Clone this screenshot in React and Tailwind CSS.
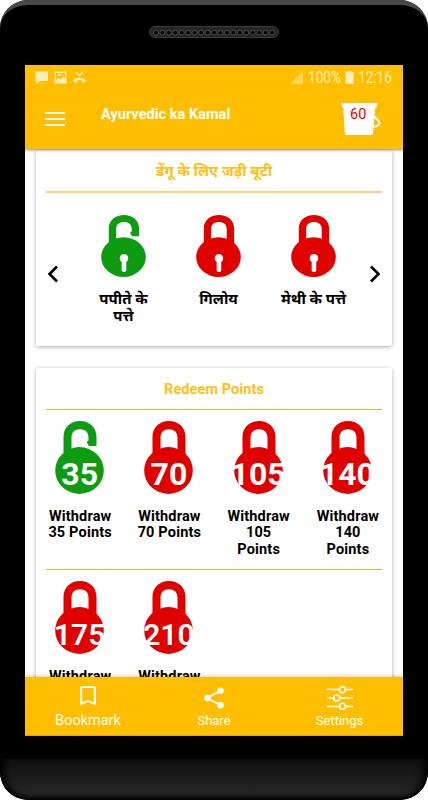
const herbs = [
  { name: "पपीते के पत्ते", open: true },
  { name: "गिलोय", open: false },
  { name: "मेथी के पत्ते", open: false },
];

const rewards = [35, 70, 105, 140, 175, 210];

const Lock = ({ open, keyhole, className }) => (
  <svg
    viewBox="0 0 49 73"
    preserveAspectRatio="none"
    className={`${open ? "text-[#0d9b12]" : "text-[#e00000]"} ${className}`}
    fill="currentColor"
  >
    {open ? (
      <path d="M8.500 38V16C8.500 6 16 0 25 0S41.500 6 41.500 16V25H33.500V23.500L32 22.300V20.500L33.500 19.500V17C33.500 11 30 8.300 25 8.300S16.500 11 16.500 17V38Z" />
    ) : (
      <path d="M8.500 38V16C8.500 6 16 0 25 0S41.500 6 41.500 16V38H33.500V17C33.500 11 30 8.300 25 8.300S16.500 11 16.500 17V38Z" />
    )}
    <ellipse cx="24.500" cy="49.500" rx="24.300" ry="23.400" />
    {keyhole && (
      <path
        fill="#fff"
        d="M25 46c-2.800 0-4.600 2.200-4.600 4.900 0 1.900.8 3.400 2.100 4.200V65c0 1.200 1 2 2.500 2s2.500-.8 2.500-2v-9.900c1.300-.8 2.100-2.300 2.100-4.200 0-2.700-1.800-4.900-4.600-4.900Z"
      />
    )}
  </svg>
);

const Speaker = () => (
  <svg className="h-3 w-[130px]" viewBox="0 0 130 12">
    <rect x="0.500" y="0.500" width="129" height="11" rx="5.500" fill="#242424" stroke="#3b3b3b" />
    {Array.from({ length: 19 }, (_, i) => (
      <circle key={i} cx={7 + i * 6.45} cy="6.600" r="2.500" fill="#050505" stroke="#555" strokeWidth="0.900" />
    ))}
  </svg>
);

const StatusBar = () => (
  <div className="flex h-6 items-center pl-[10px] pr-[11px] text-[#ffedbc]">
    <svg className="h-[13px] w-[13px]" viewBox="0 0 13 13" fill="currentColor">
      <path d="M0.500 0.500H13V10H4.500L1.500 13V10H0.500Z" />
    </svg>
    <svg className="ml-[6px] h-[13px] w-[13px]" viewBox="0 0 13 13" fill="currentColor">
      <path
        fillRule="evenodd"
        d="M1 0.500H12.500V12.500H0.500V0.500ZM2 2V9L4.500 7L6.500 8.500L9.500 5.500L11.500 7V2ZM4 3H6V5H4ZM7.500 3H8.500V4H7.500Z"
      />
    </svg>
    <svg className="ml-[6px] h-[13px] w-[13px]" viewBox="0 0 13 13" fill="none" stroke="currentColor">
      <path d="M3.500 1.500L6.500 4.500L10 1" strokeWidth="1.500" />
      <path d="M1 9.800C3.500 6.800 9.500 6.800 12 9.800" strokeWidth="2.200" />
      <path d="M1 9L2.500 10.800L4.200 9.500M12 9L10.500 10.800L8.800 9.500" strokeWidth="1.800" />
    </svg>
    <svg className="ml-auto h-[13px] w-[13px]" viewBox="0 0 13 13" fill="#ffd659">
      <path d="M13 0V13H0Z" />
    </svg>
    <span className="ml-[5px] w-[33px] origin-left scale-x-[0.85] pt-[2px] text-[16px] leading-6">100%</span>
    <svg className="ml-[4px] h-[13px] w-[9px]" viewBox="0 0 9 13" fill="currentColor">
      <path d="M0.500 1H2.500V0H6.500V1H8.500V13H0.500Z" />
    </svg>
    <span className="ml-[4px] w-[34px] origin-left scale-x-[0.85] pt-[2px] text-[16px] leading-6">12:16</span>
  </div>
);

const Header = () => (
  <header className="relative z-10 h-[84px] shrink-0 bg-[#ffbf00] shadow-[0_1px_3px_rgba(0,0,0,0.45)]">
    <StatusBar />
    <div className="flex h-[60px] items-center pl-5">
      <div className="flex w-5 flex-col gap-[4px]">
        <div className="h-[2px] bg-[#fffdf5]" />
        <div className="h-[2px] bg-[#fffdf5]" />
        <div className="h-[2px] bg-[#fffdf5]" />
      </div>
      <h1 className="mb-[9px] ml-9 whitespace-nowrap text-[14.500px] font-bold tracking-[0.03px] text-white">
        Ayurvedic ka Kamal
      </h1>
      <div className="relative ml-auto mr-[22px] h-8 w-10">
        <svg className="h-8 w-10" viewBox="0 0 40 32">
          <path d="M0 0H36.500L35.500 4.500H34.300L32 30Q31.800 32 30 32H6Q4 32 3.800 30L2.200 4.500H1.200Z" fill="#fff" />
          <path d="M33.500 13.500C35.500 17 38.700 17.500 38.500 20.300S36 23.500 32.500 23.600" fill="none" stroke="#fff" strokeWidth="2" />
        </svg>
        <span className="absolute left-[9px] top-[2px] text-[14.500px] leading-5 text-[#f00000]">60</span>
      </div>
    </div>
  </header>
);

const Arrow = ({ points }) => (
  <svg className="mt-[50px] h-[18px] w-3 shrink-0" viewBox="0 0 12 18" fill="none" stroke="#000" strokeWidth="2.600">
    <polyline points={points} />
  </svg>
);

const HerbCard = () => (
  <section className="h-[196px] shrink-0 rounded-[2px] bg-white px-[10px] shadow-[0_1px_4px_rgba(0,0,0,0.32)]">
    <h2 className="h-[41px] pt-[11px] text-center text-[15px] font-bold leading-5 text-[#ffbf18]">
      डेंगू के लिए जड़ी बूटी
    </h2>
    <div className="h-[2px] bg-[#ffcf70]" />
    <div className="flex pt-[22px]">
      <div className="ml-px">
        <Arrow points="10,1.500 2.500,9 10,16.500" />
      </div>
      <div className="ml-[17px] mr-[8px] grid w-[285px] grid-cols-3">
        {herbs.map((herb) => (
          <div key={herb.name} className="flex flex-col items-center">
            <Lock open={herb.open} keyhole className="h-[62px] w-[45px]" />
            <p className="mt-[14px] w-[68px] text-center text-[15px] font-bold leading-[16.500px]">{herb.name}</p>
          </div>
        ))}
      </div>
      <Arrow points="2,1.500 9.500,9 2,16.500" />
    </div>
  </section>
);

const Reward = ({ points }) => (
  <div className="flex flex-col items-center">
    <div className="relative h-[73px] w-[49px]">
      <Lock open={points === 35} className="h-[73px] w-[49px]" />
      <span
        className={`absolute inset-x-[-10px] text-center text-white ${
          points > 140 ? "top-[36px] text-[30px] font-semibold leading-9" : "top-[33px] text-[32px] font-bold leading-10"
        }`}
      >
        {points}
      </span>
    </div>
    <p className="mt-[14.500px] w-[68px] pl-px text-center text-[14.500px] font-bold leading-[16.700px] tracking-[0.16px]">
      Withdraw {points} Points
    </p>
  </div>
);

const RedeemCard = () => (
  <section className="mt-[22px] h-[400px] shrink-0 rounded-[2px] bg-white shadow-[0_1px_4px_rgba(0,0,0,0.32)]">
    <h2 className="mx-[10px] h-[41px] pt-[12px] text-center text-[14.500px] font-bold leading-5 tracking-[0.08px] text-[#ffbf18]">
      Redeem Points
    </h2>
    <div className="mx-[10px] h-px bg-[#ffb300]" />
    <div className="-ml-px grid h-[159px] grid-cols-4 pt-[11px]">
      {rewards.slice(0, 4).map((points) => (
        <Reward key={points} points={points} />
      ))}
    </div>
    <div className="mx-[10px] h-px bg-[#ffb300]" />
    <div className="-ml-px grid grid-cols-4 pt-[11px]">
      {rewards.slice(4).map((points) => (
        <Reward key={points} points={points} />
      ))}
    </div>
  </section>
);

const BottomNav = () => (
  <nav className="relative z-10 grid h-[59px] shrink-0 grid-cols-3 border-b border-[#dba71a] bg-[#ffbf00] text-white shadow-[0_-1px_4px_rgba(0,0,0,0.2)]">
    <div className="flex flex-col items-center pt-[9px]">
      <svg className="h-[20px] w-4" viewBox="0 0 16 20" fill="none" stroke="#fff" strokeWidth="2">
        <path d="M1.200 17.800V2Q1.200 1 2.200 1H13.800Q14.800 1 14.800 2V17.800L8 15Z" />
      </svg>
      <span className="mt-[5px] text-[14.500px] leading-5">Bookmark</span>
    </div>
    <div className="flex flex-col items-center pt-[10px]">
      <svg className="h-[22px] w-5" viewBox="0 0 20 22" fill="#fff">
        <path d="M17 3.500L3.500 11L17 18.500" fill="none" stroke="#fff" strokeWidth="2" />
        <circle cx="16.500" cy="3.700" r="3.200" />
        <circle cx="3.500" cy="11" r="3.200" />
        <circle cx="16.500" cy="18.300" r="3.200" />
      </svg>
      <span className="mt-[2px] text-[13px] leading-5">Share</span>
    </div>
    <div className="flex flex-col items-center pr-px pt-[9px]">
      <svg className="h-[24px] w-[26px]" viewBox="0 0 26 24" fill="#ffbf00" stroke="#fff" strokeWidth="1.600">
        <path d="M0 3.500H26M0 12H26M0 20.500H26" />
        <circle cx="15.500" cy="3.700" r="3" />
        <circle cx="9.700" cy="12" r="3" />
        <circle cx="15.500" cy="20.300" r="3" />
      </svg>
      <span className="mt-[1px] text-[13px] leading-5">Settings</span>
    </div>
  </nav>
);

const App = () => {
  return (
    <div className="h-[800px] w-[428px] overflow-hidden bg-white font-['Roboto','Noto_Sans_Devanagari','Noto_Sans',sans-serif] text-black">
      <div className="flex h-[800px] flex-col overflow-hidden rounded-[28px] bg-black">
        <div className="flex h-[65px] shrink-0 justify-center rounded-t-[28px] border-t-[5px] border-[#484848] pt-[21px]">
          <Speaker />
        </div>
        <main className="mx-[25px] flex h-[671px] shrink-0 flex-col overflow-hidden bg-white">
          <Header />
          <div className="flex min-h-0 flex-1 flex-col overflow-hidden px-[11px] pt-px">
            <HerbCard />
            <RedeemCard />
          </div>
          <BottomNav />
        </main>
        <div className="mt-[23px] h-[41px] shrink-0 rounded-b-[28px] bg-gradient-to-b from-[#101010] to-[#2a2a2a] shadow-[inset_0_-3px_4px_#000,inset_10px_0_10px_-6px_#000,inset_-10px_0_10px_-6px_#000]" />
      </div>
    </div>
  );
};

export default App;
